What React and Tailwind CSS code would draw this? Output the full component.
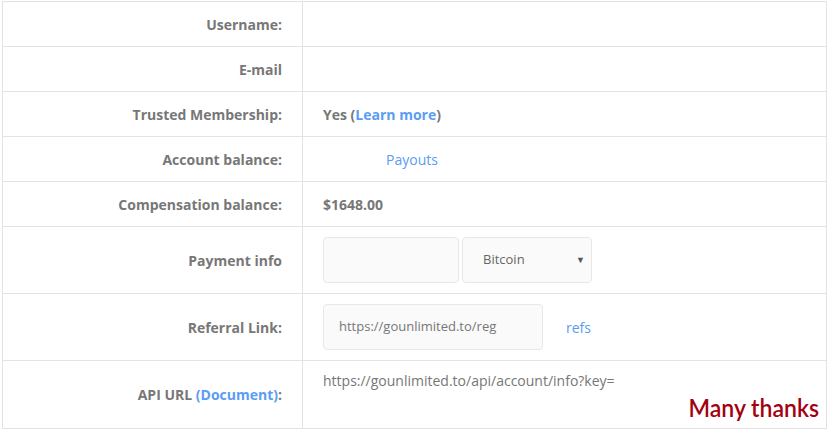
export default function App() {
  const label = "flex items-center justify-end pr-[20px] border-r border-[#e3e3e3] text-[14px] font-bold text-[#777]";
  const value = "flex items-center pl-[20px] text-[14px] text-[#777]";
  const row = "grid grid-cols-[300px_1fr] border-b border-[#e3e3e3]";

  return (
    <div className="min-h-screen bg-white pt-[1px] pl-[2px]" style={{ fontFamily: '"Open Sans", sans-serif' }}>
      <div className="w-[825px] border-l border-r border-t border-[#e3e3e3]">
        <div className={`${row} h-[45px]`}>
          <div className={label}>Username:</div>
          <div className={value}></div>
        </div>
        <div className={`${row} h-[45px]`}>
          <div className={label}>E-mail</div>
          <div className={value}></div>
        </div>
        <div className={`${row} h-[45px]`}>
          <div className={label}>Trusted Membership:</div>
          <div className={`${value} font-bold`}>
            Yes (<a className="text-[#5b9cf5]">Learn more</a>)
          </div>
        </div>
        <div className={`${row} h-[45px]`}>
          <div className={label}>Account balance:</div>
          <div className={value}>
            <span className="w-[63px]"></span>
            <a className="text-[#5b9cf5]">Payouts</a>
          </div>
        </div>
        <div className={`${row} h-[45px]`}>
          <div className={label}>Compensation balance:</div>
          <div className={`${value} font-bold`}>$1648.00</div>
        </div>
        <div className={`${row} h-[67px]`}>
          <div className={label}>Payment info</div>
          <div className={`${value} gap-[3px] pb-[1px]`}>
            <div className="w-[136px] h-[46px] rounded-[4px] border border-[#e8e8e8] bg-[#fafafa]"></div>
            <div className="relative w-[130px] h-[46px] rounded-[4px] border border-[#e8e8e8] bg-[#fafafa] flex items-center pl-[20px] text-[13px] text-[#666]">
              Bitcoin
              <span className="absolute right-[6px] top-[15px] text-[9px] text-[#555]">▼</span>
            </div>
          </div>
        </div>
        <div className={`${row} h-[67px]`}>
          <div className={label}>Referral Link:</div>
          <div className={`${value} gap-[23px]`}>
            <div className="w-[220px] h-[46px] rounded-[4px] border border-[#e8e8e8] bg-[#fafafa] flex items-center pl-[15px] text-[13px] text-[#777] overflow-hidden whitespace-nowrap">
              https://gounlimited.to/reg
            </div>
            <a className="text-[#5b9cf5]">refs</a>
          </div>
        </div>
        <div className={`${row} h-[68px]`}>
          <div className={label}>
            <span>
              API URL <a className="text-[#5b9cf5]">(Document)</a>:
            </span>
          </div>
          <div className="flex flex-col pl-[20px] pt-[10px] pr-[7px] text-[14px] text-[#777]">
            <div className="leading-[20px]">https://gounlimited.to/api/account/info?key=</div>
            <div className="text-right mt-[3px]">
              <span className="inline-block origin-right scale-x-[0.96] text-[24px] leading-[28px] font-semibold text-[#a30010]" style={{ fontFamily: 'Lato, sans-serif' }}>
                Many thanks
              </span>
            </div>
          </div>
        </div>
      </div>
    </div>
  );
}
